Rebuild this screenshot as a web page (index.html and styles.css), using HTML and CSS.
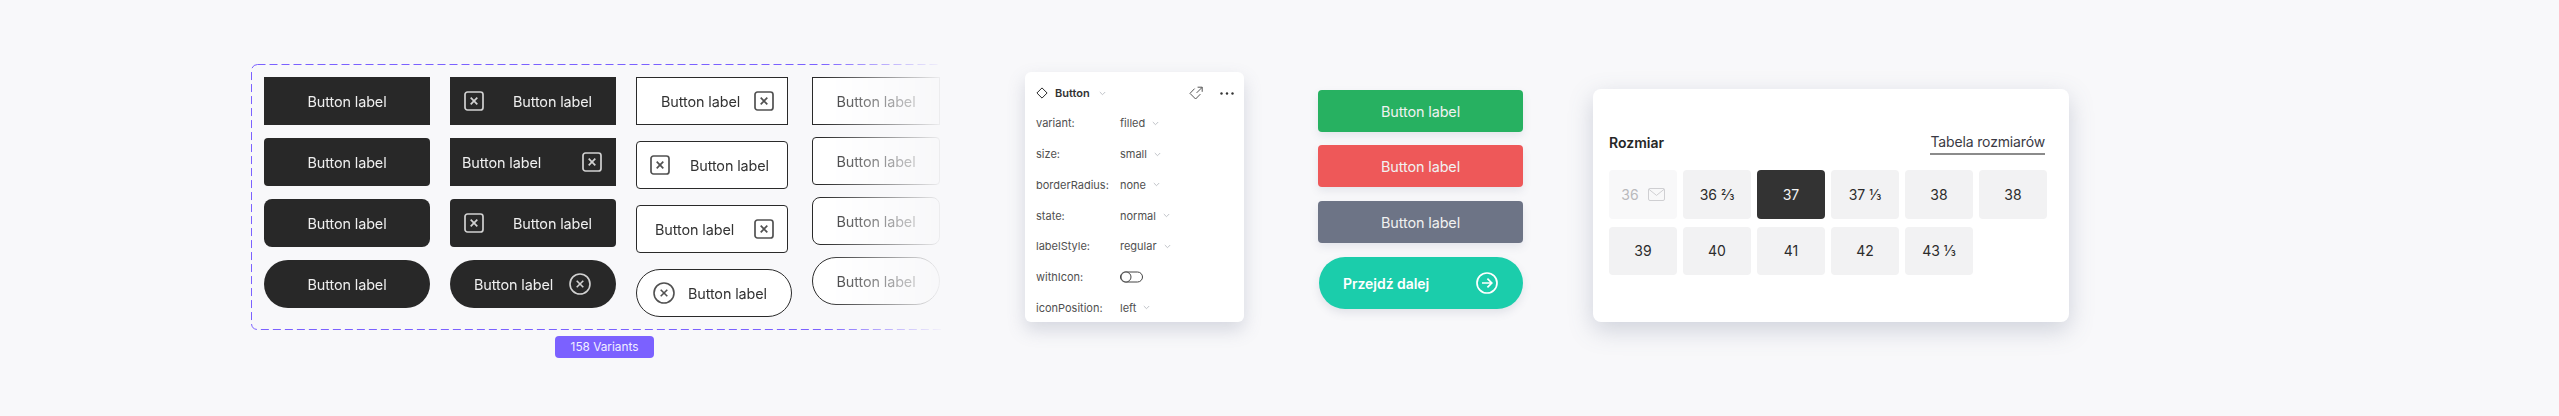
FILE: index.html
```html
<!DOCTYPE html>
<html lang="pl">
<head>
<meta charset="utf-8">
<title>Button variants</title>
<link rel="stylesheet" href="styles.css">
</head>
<body>
<svg class="defs" width="0" height="0" aria-hidden="true">
  <symbol id="x-square" viewBox="0 0 20 20"><rect x="1" y="1" width="18" height="18" rx="2.5" fill="none" stroke="currentColor" stroke-width="1.7"/><path d="M6.7 6.7l6.6 6.6M13.3 6.7l-6.6 6.6" fill="none" stroke="currentColor" stroke-width="1.7"/></symbol>
  <symbol id="x-circle" viewBox="0 0 22 22"><circle cx="11" cy="11" r="10" fill="none" stroke="currentColor" stroke-width="1.6"/><path d="M7.7 7.7l6.6 6.6M14.3 7.7l-6.6 6.6" fill="none" stroke="currentColor" stroke-width="1.6"/></symbol>
  <symbol id="chev" viewBox="0 0 7 5"><path d="M.8 1l2.7 2.7L6.2 1" fill="none" stroke="#b9bcc2" stroke-width=".9"/></symbol>
</svg>
<main class="stage">
  <section class="set">
    <div class="frame">
      <svg class="dash" width="690" height="266" aria-hidden="true"><rect x=".5" y=".5" width="800" height="265" rx="6" fill="none" stroke="#7b61ff" stroke-width="1" stroke-dasharray="8 4"/></svg>
      <div class="grid">
        <div class="col c1">
          <div class="btn fill"><span class="lbl">Button label</span></div>
          <div class="btn fill r4"><span class="lbl">Button label</span></div>
          <div class="btn fill r8"><span class="lbl">Button label</span></div>
          <div class="btn fill pill"><span class="lbl">Button label</span></div>
        </div>
        <div class="col c2">
          <div class="btn fill split il"><svg class="ic"><use href="#x-square"/></svg><span class="lbl">Button label</span></div>
          <div class="btn fill r0 split ir"><span class="lbl">Button label</span><svg class="ic"><use href="#x-square"/></svg></div>
          <div class="btn fill r4 split il"><svg class="ic"><use href="#x-square"/></svg><span class="lbl">Button label</span></div>
          <div class="btn fill pill split icr"><span class="lbl">Button label</span><svg class="ic big"><use href="#x-circle"/></svg></div>
        </div>
        <div class="col c3">
          <div class="btn line w152 split o1"><span class="lbl">Button label</span><svg class="ic"><use href="#x-square"/></svg></div>
          <div class="btn line w152 r4 split o2"><svg class="ic"><use href="#x-square"/></svg><span class="lbl">Button label</span></div>
          <div class="btn line w152 r4 split o3"><span class="lbl">Button label</span><svg class="ic"><use href="#x-square"/></svg></div>
          <div class="btn line pill split o4"><svg class="ic big"><use href="#x-circle"/></svg><span class="lbl">Button label</span></div>
        </div>
        <div class="col c4">
          <div class="btn line"><span class="lbl">Button label</span></div>
          <div class="btn line r4"><span class="lbl">Button label</span></div>
          <div class="btn line r8"><span class="lbl">Button label</span></div>
          <div class="btn line pill"><span class="lbl">Button label</span></div>
        </div>
      </div>
    </div>
    <div class="badge">158 Variants</div>
  </section>

  <section class="panel">
    <div class="phead">
      <svg class="pdiamond" width="12" height="12" viewBox="0 0 12 12"><path d="M6 .9L11.1 6 6 11.1.9 6z" fill="none" stroke="#2b2b2b" stroke-width="1"/></svg>
      <b class="pname">Button</b>
      <svg class="chev" width="7" height="5"><use href="#chev"/></svg>
      <svg class="ptag" width="15" height="15" viewBox="0 0 15 15"><path d="M5.6 2.6L1 7.4l5.6 5.6 4.8-4.9M7.6 6.9l5.5-5.5M8.6 1.2h4.6v4.6" fill="none" stroke="#555" stroke-width="1"/></svg>
      <svg class="pdots" width="14" height="3" viewBox="0 0 14 3"><circle cx="1.5" cy="1.5" r="1.2" fill="#333"/><circle cx="7" cy="1.5" r="1.2" fill="#333"/><circle cx="12.5" cy="1.5" r="1.2" fill="#333"/></svg>
    </div>
    <div class="prow"><span class="pk">variant:</span><span class="pv">filled</span><svg class="chev" width="7" height="5"><use href="#chev"/></svg></div>
    <div class="prow"><span class="pk">size:</span><span class="pv">small</span><svg class="chev" width="7" height="5"><use href="#chev"/></svg></div>
    <div class="prow"><span class="pk">borderRadius:</span><span class="pv">none</span><svg class="chev" width="7" height="5"><use href="#chev"/></svg></div>
    <div class="prow"><span class="pk">state:</span><span class="pv">normal</span><svg class="chev" width="7" height="5"><use href="#chev"/></svg></div>
    <div class="prow"><span class="pk">labelStyle:</span><span class="pv">regular</span><svg class="chev" width="7" height="5"><use href="#chev"/></svg></div>
    <div class="prow"><span class="pk">withIcon:</span><svg width="24" height="12" viewBox="0 0 24 12"><rect x=".5" y="1" width="22" height="10" rx="5" fill="none" stroke="#444" stroke-width="1"/><circle cx="6" cy="6" r="5" fill="#fff" stroke="#444" stroke-width="1"/></svg></div>
    <div class="prow"><span class="pk">iconPosition:</span><span class="pv">left</span><svg class="chev" width="7" height="5"><use href="#chev"/></svg></div>
  </section>

  <section class="states">
    <div class="sbtn green"><span class="lbl">Button label</span></div>
    <div class="sbtn red"><span class="lbl">Button label</span></div>
    <div class="sbtn grey"><span class="lbl">Button label</span></div>
    <div class="cta"><span class="ctal">Przejdź dalej</span><svg width="22" height="22" viewBox="0 0 22 22"><circle cx="11" cy="11" r="10" fill="none" stroke="#fff" stroke-width="1.7"/><path d="M6 11h9.6M11.4 6.6l4.4 4.4-4.4 4.4" fill="none" stroke="#fff" stroke-width="1.7"/></svg></div>
  </section>

  <section class="card">
    <div class="chead"><h2 class="ctitle">Rozmiar</h2><span class="clink">Tabela rozmiarów</span></div>
    <div class="sizes">
      <div class="size off"><span>36</span><svg width="17" height="13" viewBox="0 0 17 13"><rect x=".5" y=".5" width="16" height="12" rx="1.5" fill="none" stroke="#cfcfd2"/><path d="M.8 1.2l7.7 6.2 7.7-6.2" fill="none" stroke="#cfcfd2"/></svg></div>
      <div class="size">36 ⅔</div>
      <div class="size on">37</div>
      <div class="size">37 ⅓</div>
      <div class="size">38</div>
      <div class="size">38</div>
      <div class="size">39</div>
      <div class="size">40</div>
      <div class="size">41</div>
      <div class="size">42</div>
      <div class="size">43 ⅓</div>
    </div>
  </section>
</main>
</body>
</html>
```
FILE: styles.css
```css
* { box-sizing: border-box; }
html, body { margin: 0; padding: 0; }
body { width: 2559px; height: 416px; background: #f8f8fa; overflow: hidden; font-family: "Inter", "Liberation Sans", sans-serif; color: #2a2a2a; }
.defs { position: absolute; }
.stage { display: flex; align-items: flex-start; padding: 64px 0 0 251px; }

.set { display: flex; flex-direction: column; width: 690px; margin-right: 84px; }
.frame { position: relative; width: 690px; height: 266px; padding: 13px 0 0 13px; -webkit-mask-image: linear-gradient(to right, #000 570px, rgba(0, 0, 0, .05) 689px); mask-image: linear-gradient(to right, #000 570px, rgba(0, 0, 0, .05) 689px); }
.dash { position: absolute; left: 0; top: 0; overflow: hidden; }
.grid { display: flex; gap: 20px; }
.col { display: flex; flex-direction: column; }
.c1, .c2 { width: 166px; gap: 13px; }
.c3 { width: 156px; gap: 16px; }
.c4 { width: 128px; gap: 12px; }

.btn { height: 48px; display: flex; align-items: center; justify-content: center; flex: none; }
.lbl { font-size: 14.4px; letter-spacing: -.1px; white-space: nowrap; }
.fill { background: #282828; color: #efefef; }
.line { background: #fff; border: 1px solid #2a2a2a; color: #333; }
.r4 { border-radius: 4px; }
.r8 { border-radius: 8px; }
.r0 { border-radius: 0; }
.pill { border-radius: 24px; }
.w152 { width: 152px; }
.split { justify-content: space-between; }
.ic { width: 20px; height: 20px; flex: none; opacity: .85; }
.big { width: 22px; height: 22px; }
.il { padding: 0 24px 0 14px; }
.ir { padding: 0 14px 0 12px; }
.icr { padding: 0 25px 0 24px; }
.o1 { padding: 0 13px 0 24px; }
.o2 { padding: 0 18px 0 13px; }
.o3 { padding: 0 13px 0 18px; }
.o4 { padding: 0 24px 0 16px; }

.badge { align-self: flex-start; margin: 6px 0 0 304px; width: 99px; height: 22px; border-radius: 4px; background: #7b61ff; color: #f2efff; font-size: 11.8px; display: flex; align-items: center; justify-content: center; }

.panel { width: 219px; height: 250px; margin-top: 8px; margin-right: 74px; background: #fff; border-radius: 6px; box-shadow: 0 8px 18px rgba(90, 100, 130, .22); padding: 6px 10px 0 11px; overflow: hidden; font-size: 11px; color: #505050; }
.phead { height: 30px; display: flex; align-items: center; }
.pname { margin-left: 7px; color: #333; font-weight: 600; }
.phead .chev { margin-left: 9px; }
.ptag { margin-left: auto; }
.pdots { margin-left: 16px; }
.prow { height: 30.75px; display: flex; align-items: center; }
.pk { width: 84px; flex: none; }
.pv { margin-right: 7px; }

.states { width: 205px; margin-top: 26px; margin-right: 70px; display: flex; flex-direction: column; }
.sbtn { height: 42px; border-radius: 4px; color: #f1f1f1; display: flex; align-items: center; justify-content: center; box-shadow: 0 4px 8px rgba(90, 100, 130, .12); margin-bottom: 13px; }
.green { background: #27b161; }
.red { background: #ee5859; }
.grey { background: #6d7486; margin-top: 1px; }
.cta { width: 204px; height: 52px; margin-left: 1px; margin-top: 1px; border-radius: 26px; background: #1bcdab; color: #fff; display: flex; align-items: center; justify-content: space-between; padding: 0 25px 0 24px; box-shadow: 0 4px 8px rgba(90, 100, 130, .14); }
.ctal { font-size: 14px; font-weight: 600; letter-spacing: -.05px; }

.card { width: 476px; height: 233px; margin-top: 25px; background: #fff; border-radius: 8px; box-shadow: 0 8px 24px rgba(90, 100, 130, .26); padding: 0 22px 0 16px; }
.chead { height: 81px; padding: 43px 2px 0 0; display: flex; justify-content: space-between; align-items: flex-start; }
.ctitle { margin: 1px 0 0; font-size: 14px; line-height: 20px; font-weight: 600; color: #262626; }
.clink { font-size: 14px; line-height: 20px; padding-bottom: 1px; border-bottom: 2px solid #8b8b8b; color: #3a3a44; letter-spacing: -.15px; }
.sizes { display: grid; grid-template-columns: repeat(6, 68px); grid-auto-rows: 48.5px; column-gap: 6px; row-gap: 8px; }
.size { background: #f2f2f3; border-radius: 4px; display: flex; align-items: center; justify-content: center; font-size: 14px; color: #2c2c2c; }
.off { background: #f8f8f9; color: #b9b9bc; gap: 9px; }
.on { background: #333; color: #f4f4f4; }
```
